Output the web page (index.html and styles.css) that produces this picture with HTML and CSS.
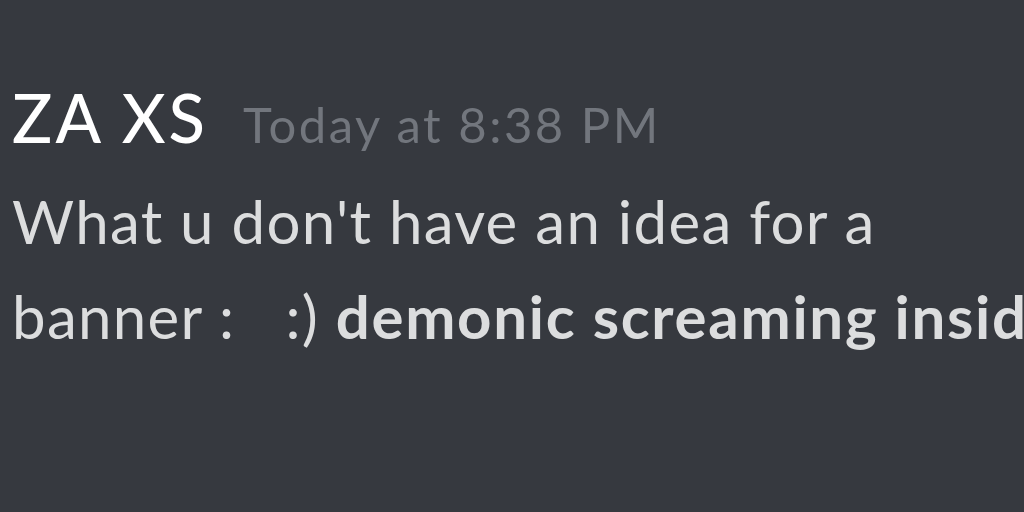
FILE: index.html
```html
<!DOCTYPE html>
<html>
<head>
<meta charset="utf-8">
<link rel="stylesheet" href="styles.css">
</head>
<body>
<div class="message">
  <div class="header">
    <span class="username">ZA XS</span>
    <span class="timestamp">Today at 8:38 PM</span>
  </div>
  <div class="content">
    <div class="line">What u don't have an idea for a</div>
    <div class="line">banner :&nbsp;&nbsp; :) <strong class="bold">demonic screaming inside</strong></div>
  </div>
</div>
</body>
</html>
```
FILE: styles.css
```css
html, body {
  margin: 0;
  padding: 0;
  width: 1024px;
  height: 512px;
  overflow: hidden;
  background: #36393f;
}
body {
  font-family: Lato, "Open Sans", sans-serif;
}
.message {
  padding: 77px 0 0 12px;
  white-space: nowrap;
}
.header {
  display: flex;
  align-items: baseline;
  gap: 35px;
  height: 97px;
  line-height: 80px;
}
.username {
  color: #ffffff;
  font-size: 67px;
  font-weight: 500;
  letter-spacing: 3px;
}
.timestamp {
  color: #72767d;
  font-size: 49px;
  letter-spacing: 2.5px;
}
.content {
  color: #dcddde;
  font-size: 60px;
  line-height: 95px;
  letter-spacing: 1.3px;
}
.bold {
  font-weight: 700;
  letter-spacing: 1.7px;
}
```
